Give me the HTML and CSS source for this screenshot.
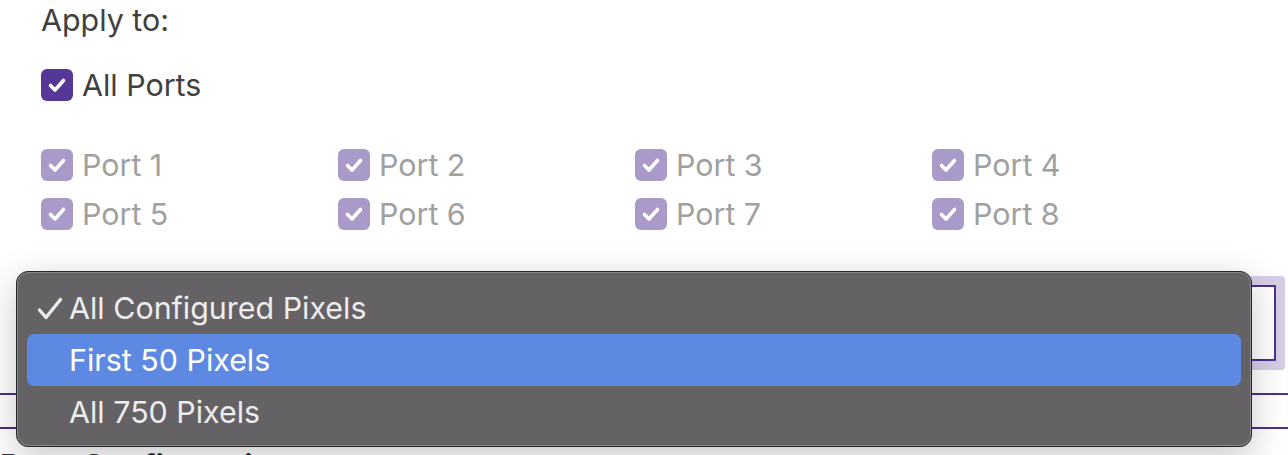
FILE: index.html
```html
<!DOCTYPE html>
<html lang="en">
<head>
<meta charset="utf-8">
<title>Apply to</title>
<link rel="stylesheet" href="styles.css">
</head>
<body>
<div class="page">
  <div class="content">
    <div class="title">Apply to:</div>
    <label class="check-row all">
      <svg class="box" viewBox="0 0 32 32"><rect width="32" height="32" rx="6"/><polyline points="9.5,16.5 14,21 22.5,11.5"/></svg>
      <span>All Ports</span>
    </label>
    <div class="ports">
      <label class="check-row port"><svg class="box" viewBox="0 0 32 32"><rect width="32" height="32" rx="6"/><polyline points="9.5,16.5 14,21 22.5,11.5"/></svg><span>Port 1</span></label>
      <label class="check-row port"><svg class="box" viewBox="0 0 32 32"><rect width="32" height="32" rx="6"/><polyline points="9.5,16.5 14,21 22.5,11.5"/></svg><span>Port 2</span></label>
      <label class="check-row port"><svg class="box" viewBox="0 0 32 32"><rect width="32" height="32" rx="6"/><polyline points="9.5,16.5 14,21 22.5,11.5"/></svg><span>Port 3</span></label>
      <label class="check-row port"><svg class="box" viewBox="0 0 32 32"><rect width="32" height="32" rx="6"/><polyline points="9.5,16.5 14,21 22.5,11.5"/></svg><span>Port 4</span></label>
      <label class="check-row port"><svg class="box" viewBox="0 0 32 32"><rect width="32" height="32" rx="6"/><polyline points="9.5,16.5 14,21 22.5,11.5"/></svg><span>Port 5</span></label>
      <label class="check-row port"><svg class="box" viewBox="0 0 32 32"><rect width="32" height="32" rx="6"/><polyline points="9.5,16.5 14,21 22.5,11.5"/></svg><span>Port 6</span></label>
      <label class="check-row port"><svg class="box" viewBox="0 0 32 32"><rect width="32" height="32" rx="6"/><polyline points="9.5,16.5 14,21 22.5,11.5"/></svg><span>Port 7</span></label>
      <label class="check-row port"><svg class="box" viewBox="0 0 32 32"><rect width="32" height="32" rx="6"/><polyline points="9.5,16.5 14,21 22.5,11.5"/></svg><span>Port 8</span></label>
    </div>
    <div class="select"></div>
  </div>
  <div class="rules">
    <div class="rule"></div>
    <div class="rule-gap"></div>
    <div class="rule"></div>
  </div>
  <div class="section-title">Base Configuration</div>

  <div class="menu">
    <div class="item"><svg class="tick" viewBox="0 0 26 24"><polyline points="2.5,13 9,20.5 23.5,2.5"/></svg>All Configured Pixels</div>
    <div class="item active">First 50 Pixels</div>
    <div class="item">All 750 Pixels</div>
  </div>
</div>
</body>
</html>
```

FILE: styles.css
```css
html, body {
  margin: 0;
  padding: 0;
  background: #ffffff;
  overflow: hidden;
}
body {
  font-family: "Inter", "Liberation Sans", sans-serif;
  font-size: 30.4px;
  color: #404040;
}
.page {
  position: relative;
  width: 1288px;
  height: 455px;
  overflow: hidden;
}
.content {
  padding: 0 12px 0 41px;
  display: flex;
  flex-direction: column;
}
.title {
  height: 41px;
  line-height: 41px;
  color: #404040;
}
.check-row {
  display: flex;
  align-items: center;
  gap: 9px;
  height: 32px;
  line-height: 32px;
}
.all {
  margin-top: 28px;
  color: #404040;
}
.box {
  width: 32px;
  height: 32px;
  flex: none;
}
.box rect {
  fill: #553798;
}
.box polyline {
  fill: none;
  stroke: #ffffff;
  stroke-width: 3.6;
  stroke-linecap: round;
  stroke-linejoin: round;
}
.ports {
  margin-top: 48px;
  display: grid;
  grid-template-columns: repeat(4, 297px);
  row-gap: 17px;
}
.port {
  color: #a0a0a0;
}
.port .box rect {
  fill: #aa9aca;
}
.select {
  margin-top: 55px;
  height: 72px;
  border: 2px solid #4e2e90;
  box-shadow: 0 0 0 9px #d6cee6;
  background: #ffffff;
  border-radius: 1px;
}
.rules {
  margin-top: 32px;
  display: flex;
  flex-direction: column;
}
.rule {
  height: 2px;
  background: #4e2e90;
}
.rule-gap {
  height: 32px;
}
.section-title {
  margin-top: 19px;
  font-weight: 700;
  font-size: 31px;
  line-height: 36px;
  color: #333333;
  white-space: nowrap;
}
.menu {
  position: absolute;
  top: 271px;
  left: 16px;
  width: 1236px;
  height: 176px;
  box-sizing: border-box;
  padding: 10px 10px 0 10px;
  background: #646264;
  border: 1px solid #262626;
  border-radius: 12px;
  box-shadow: inset 0 0 0 1px #8c8b8c, 0 10px 36px rgba(0, 0, 0, 0.22);
  color: #ececec;
}
.item {
  position: relative;
  height: 52px;
  line-height: 52px;
  padding-left: 42px;
  border-radius: 7px;
  white-space: nowrap;
}
.item.active {
  background: #5e89e2;
  color: #ffffff;
}
.tick {
  position: absolute;
  left: 10px;
  top: 15px;
  width: 26px;
  height: 24px;
}
.tick polyline {
  fill: none;
  stroke: #ececec;
  stroke-width: 3.4;
  stroke-linecap: round;
  stroke-linejoin: round;
}
```
